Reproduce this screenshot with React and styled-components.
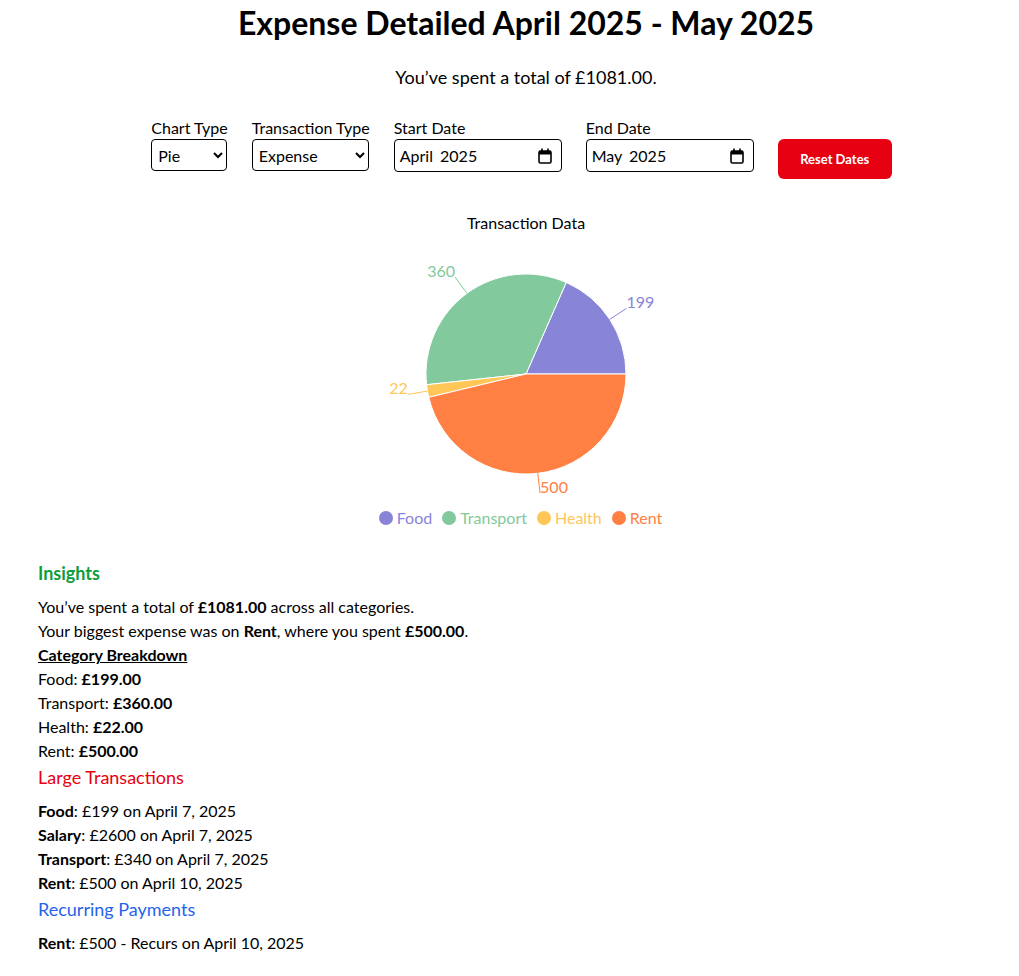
import React, { useState } from 'react';
import styled, { createGlobalStyle } from 'styled-components';

const GlobalStyle = createGlobalStyle`
    body {
        margin: 0;
        background: #fff;
        color: #000;
        font-family: Lato, "Liberation Sans", sans-serif;
    }
`;

const data = [
    { name: 'Food', value: 199, color: '#8884d8' },
    { name: 'Transport', value: 360, color: '#82ca9d' },
    { name: 'Health', value: 22, color: '#ffc658' },
    { name: 'Rent', value: 500, color: '#ff8042' },
];

const large = [
    { name: 'Food', text: ': £199 on April 7, 2025' },
    { name: 'Salary', text: ': £2600 on April 7, 2025' },
    { name: 'Transport', text: ': £340 on April 7, 2025' },
    { name: 'Rent', text: ': £500 on April 10, 2025' },
];

const CX = 160;
const CY = 141;
const R = 100;
const RAD = Math.PI / 180;

const point = (angle, radius) => [CX + radius * Math.cos(angle * RAD), CY - radius * Math.sin(angle * RAD)];

const slices = () => {
    const total = data.reduce((s, d) => s + d.value, 0);
    let start = 0;
    return data.map((d) => {
        const sweep = (d.value / total) * 360;
        const end = start + sweep;
        const mid = start + sweep / 2;
        const [x1, y1] = point(start, R);
        const [x2, y2] = point(end, R);
        const large = sweep > 180 ? 1 : 0;
        const path = `M${CX},${CY} L${x1},${y1} A${R},${R} 0 ${large} 0 ${x2},${y2} Z`;
        const [lx1, ly1] = point(mid, R);
        const [lx2, ly2] = point(mid, R + 20);
        const anchor = Math.cos(mid * RAD) >= 0 ? 'start' : 'end';
        start = end;
        return { ...d, path, lx1, ly1, lx2, ly2, anchor };
    });
};

const PieChart = () => (
    <svg width="320" height="268" viewBox="0 0 320 268">
        {slices().map((s) => (
            <g key={s.name}>
                <path d={s.path} fill={s.color} stroke="#fff" strokeWidth="1" />
                <line x1={s.lx1} y1={s.ly1} x2={s.lx2} y2={s.ly2} stroke={s.color} strokeWidth="1" />
                <text x={s.lx2} y={s.ly2} textAnchor={s.anchor} fill={s.color} fontSize="16">
                    {s.value}
                </text>
            </g>
        ))}
    </svg>
);

const CalendarIcon = () => (
    <svg width="14" height="16" viewBox="0 0 14 16">
        <rect x="1" y="3" width="12" height="12" rx="1.5" fill="none" stroke="#000" strokeWidth="1.6" />
        <rect x="1" y="3" width="12" height="3.5" fill="#000" />
        <rect x="3.2" y="0.5" width="1.6" height="3" fill="#000" />
        <rect x="9.2" y="0.5" width="1.6" height="3" fill="#000" />
    </svg>
);

const MonthPicker = ({ value }) => (
    <DateBox>
        <DateText>{value}</DateText>
        <CalendarIcon />
    </DateBox>
);

const App = () => {
    const [chartType, setChartType] = useState('pie');
    const [txType, setTxType] = useState('expense');

    return (
        <Page>
            <GlobalStyle />
            <Title>Expense Detailed April 2025 - May 2025</Title>
            <Summary>You’ve spent a total of £1081.00.</Summary>

            <Controls>
                <Field>
                    <Label>Chart Type</Label>
                    <Select $w={76} value={chartType} onChange={(e) => setChartType(e.target.value)}>
                        <option value="pie">Pie</option>
                        <option value="bar">Bar</option>
                    </Select>
                </Field>
                <Field>
                    <Label>Transaction Type</Label>
                    <Select $w={117} value={txType} onChange={(e) => setTxType(e.target.value)}>
                        <option value="expense">Expense</option>
                        <option value="income">Income</option>
                    </Select>
                </Field>
                <Field>
                    <Label>Start Date</Label>
                    <MonthPicker value="April 2025" />
                </Field>
                <Field>
                    <Label>End Date</Label>
                    <MonthPicker value="May 2025" />
                </Field>
                <ResetButton>Reset Dates</ResetButton>
            </Controls>

            <ChartBox>
                <ChartTitle>Transaction Data</ChartTitle>
                <PieChart />
                <Legend>
                    {data.map((d) => (
                        <LegendItem key={d.name} $color={d.color}>
                            <Dot $color={d.color} />
                            {d.name}
                        </LegendItem>
                    ))}
                </Legend>
            </ChartBox>

            <Section>
                <Heading $color="#0f9d3c" $bold>Insights</Heading>
                <Line>You’ve spent a total of <b>£1081.00</b> across all categories.</Line>
                <Line>Your biggest expense was on <b>Rent</b>, where you spent <b>£500.00</b>.</Line>
                <Line><Underlined>Category Breakdown</Underlined></Line>
                {data.map((d) => (
                    <Line key={d.name}>{d.name}: <b>£{d.value.toFixed(2)}</b></Line>
                ))}

                <Heading $color="#e8000e" $top>Large Transactions</Heading>
                {large.map((t) => (
                    <Line key={t.name}><b>{t.name}</b>{t.text}</Line>
                ))}

                <Heading $color="#2563eb" $top>Recurring Payments</Heading>
                <Line><b>Rent</b>: £500 - Recurs on April 10, 2025</Line>
            </Section>
        </Page>
    );
};

const Page = styled.div`
    padding: 8px 5px 20px 38px;
`;

const Title = styled.h1`
    font-size: 32px;
    font-weight: 700;
    line-height: 30px;
    margin: 0;
    text-align: center;
`;

const Summary = styled.p`
    font-size: 18px;
    line-height: 24px;
    margin: 27px 0 0;
    text-align: center;
`;

const Controls = styled.div`
    align-items: flex-start;
    display: flex;
    gap: 24px;
    justify-content: center;
    margin-top: 29px;
    padding-right: 9px;
`;

const Field = styled.div`
    display: flex;
    flex-direction: column;
    gap: 1px;
`;

const Label = styled.label`
    font-size: 16px;
    line-height: 20px;
`;

const Select = styled.select`
    background: #fff;
    border: 1px solid #000;
    border-radius: 4px;
    color: #000;
    font-family: inherit;
    font-size: 16px;
    height: 32px;
    padding: 0 2px;
    width: ${(p) => p.$w}px;
`;

const DateBox = styled.div`
    align-items: center;
    background: #fff;
    border: 1px solid #000;
    border-radius: 4px;
    box-sizing: border-box;
    display: flex;
    height: 33px;
    justify-content: space-between;
    padding: 0 9px 0 5px;
    width: 168px;
`;

const DateText = styled.span`
    font-size: 16px;
    word-spacing: 3px;
`;

const ResetButton = styled.button`
    background: #e60012;
    border: none;
    border-radius: 6px;
    color: #fff;
    cursor: pointer;
    font-family: inherit;
    font-size: 13px;
    font-weight: 700;
    height: 40px;
    margin-top: 21px;
    width: 114px;
`;

const ChartBox = styled.div`
    align-items: center;
    display: flex;
    flex-direction: column;
    margin-top: 34px;
`;

const ChartTitle = styled.div`
    font-size: 16px;
    line-height: 20px;
`;

const Legend = styled.div`
    display: flex;
    gap: 10px;
    justify-content: center;
    margin-top: 7px;
    padding-right: 11px;
`;

const LegendItem = styled.span`
    align-items: center;
    color: ${(p) => p.$color};
    display: flex;
    font-size: 16px;
    gap: 4px;
    line-height: 20px;
`;

const Dot = styled.span`
    background: ${(p) => p.$color};
    border-radius: 50%;
    display: inline-block;
    height: 14px;
    width: 14px;
`;

const Section = styled.div`
    margin-top: 33px;
`;

const Heading = styled.h3`
    color: ${(p) => p.$color};
    font-size: 18px;
    font-weight: ${(p) => (p.$bold ? 700 : 400)};
    line-height: 24px;
    margin: ${(p) => (p.$top ? '2px' : '0')} 0 10px;
`;

const Line = styled.p`
    font-size: 16px;
    line-height: 24px;
    margin: 0;
`;

const Underlined = styled.b`
    text-decoration: underline;
`;

export default App;
